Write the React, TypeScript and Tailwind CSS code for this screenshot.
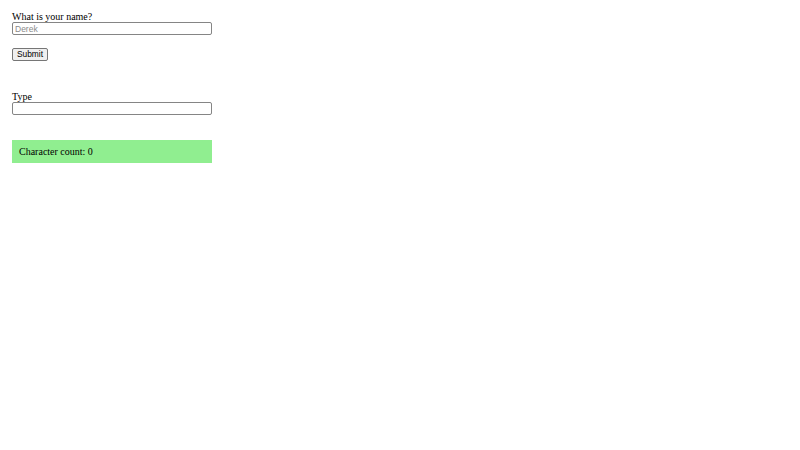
import React from "react";

export default function App() {
  return (
    <div className="w-[800px] h-[450px] bg-white pl-[12px] pt-[11px] text-black" style={{ fontFamily: '"Liberation Serif", serif' }}>
      <form className="flex flex-col items-start">
        <label className="text-[10px] leading-[11px]">What is your name?</label>
        <input
          className="w-[200px] h-[13px] border border-[#858585] rounded-[2px] px-[2px] text-[8.5px] leading-[11px] placeholder:text-[#8a8a8a] outline-none"
          style={{ fontFamily: '"Liberation Sans", sans-serif' }}
          placeholder="Derek"
        />
        <button
          type="button"
          className="mt-[13px] w-[36px] h-[13px] border border-[#767676] rounded-[2px] bg-[#efefef] text-[8.4px] font-normal leading-[11px] text-black"
          style={{ fontFamily: '"Liberation Sans", sans-serif' }}
        >
          Submit
        </button>
      </form>
      <div className="mt-[30px] flex flex-col items-start">
        <label className="text-[10px] leading-[11px]">Type</label>
        <input
          className="w-[200px] h-[13px] border border-[#858585] rounded-[2px] px-[2px] text-[8.5px] outline-none"
          style={{ fontFamily: '"Liberation Sans", sans-serif' }}
        />
      </div>
      <div className="mt-[25px] w-[200px] h-[23px] bg-[#90ee90] px-[7px] flex items-center text-[10px]">
        Character count: 0
      </div>
    </div>
  );
}
